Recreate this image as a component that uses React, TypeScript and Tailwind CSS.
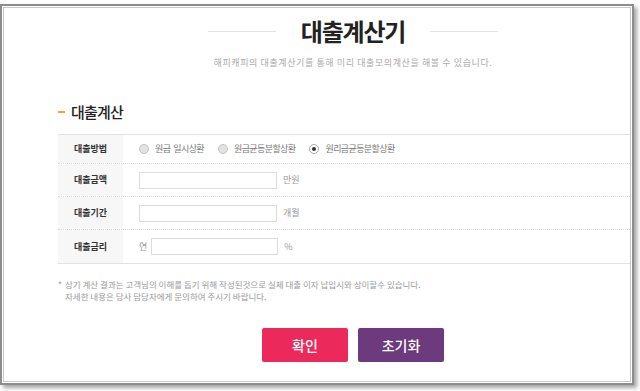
const FONT = "font-['Noto_Sans_CJK_KR','Noto_Sans',sans-serif]";

const rows = [
  { label: "대출금액", unit: "만원", prefix: "" },
  { label: "대출기간", unit: "개월", prefix: "" },
  { label: "대출금리", unit: "%", prefix: "연" },
];

const methods = ["원금 일시상환", "원금균등분할상환", "원리금균등분할상환"];

function Radio({ checked }: { checked?: boolean }) {
  return checked ? (
    <span className="flex h-[10px] w-[10px] items-center justify-center rounded-full border border-[#a8a8a8] bg-white">
      <span className="h-[4px] w-[4px] rounded-full bg-[#333]" />
    </span>
  ) : (
    <span className="h-[10px] w-[10px] rounded-full border border-[#c4c4c4] bg-[#e2e2e2]" />
  );
}

function Label({ children }: { children: string }) {
  return (
    <div className="flex w-[65px] shrink-0 items-center justify-center bg-[#f7f7f7] text-[9px] font-bold text-[#333]">
      {children}
    </div>
  );
}

export default function App() {
  return (
    <div className={`${FONT} h-[391px] w-[640px] overflow-hidden bg-white`}>
      <div className="mt-[4px] h-[381px] w-[634px] border-2 border-[#8d8d8d] p-[1px] shadow-[3px_3px_4px_rgba(0,0,0,0.35)]">
        <div className="h-full w-full overflow-hidden border border-[#c9c9c9] bg-white">
          <div className="w-[698px] px-[54px]">
            {/* title */}
            <div className="mt-[6px] flex h-[34px] items-center justify-center">
              <span className="h-px w-[68px] bg-[#e3e3e3]" />
              <h1 className="mx-[25px] text-[24px] font-bold leading-none tracking-[-1.2px] text-[#222]">
                대출계산기
              </h1>
              <span className="h-px w-[68px] bg-[#e3e3e3]" />
            </div>
            <p className="mt-[9px] text-center text-[9px] leading-[12px] tracking-[0.6px] text-[#aaa]">
              해피캐피의 대출계산기를 통해 미리 대출모의계산을 해볼 수 있습니다.
            </p>

            {/* section heading */}
            <div className="mt-[33px] flex h-[20px] items-center">
              <span className="h-[2px] w-[7px] bg-[#f5a623]" />
              <h2 className="ml-[6px] text-[15px] font-medium tracking-[-0.8px] text-[#222]">대출계산</h2>
            </div>

            {/* table */}
            <div className="mt-[12px] border-y border-[#e2e2e2] text-[9px]">
              <div className="flex h-[29px] border-b border-dotted border-[#d8d8d8]">
                <Label>대출방법</Label>
                <div className="flex items-center pl-[16px] tracking-[-0.6px] text-[#777] [word-spacing:1.5px]">
                  {methods.map((m, i) => (
                    <div key={m} className={`flex items-center ${i > 0 ? "ml-[14px]" : ""}`}>
                      <Radio checked={i === 2} />
                      <span className="ml-[6px]">{m}</span>
                    </div>
                  ))}
                </div>
              </div>
              {rows.map((r, i) => (
                <div
                  key={r.label}
                  className={`flex h-[33px] ${i < rows.length - 1 ? "border-b border-dotted border-[#d8d8d8]" : ""}`}
                >
                  <Label>{r.label}</Label>
                  <div className="flex items-center pl-[16px] text-[#999]">
                    {r.prefix && <span className="mr-[4px]">{r.prefix}</span>}
                    <div
                      className={`h-[17px] border border-[#dcdcdc] bg-white ${r.prefix ? "w-[127px]" : "w-[138px]"}`}
                    />
                    <span className="ml-[6px]">{r.unit}</span>
                  </div>
                </div>
              ))}
            </div>

            {/* notes */}
            <div className="mt-[14px] text-[8.5px] leading-[12px] text-[#999]">
              <p>
                <span className="mr-[3px]">*</span>상기 계산 결과는 고객님의 이해를 돕기 위해 작성된것으로 실제 대출 이자 납입시와 상이할수 있습니다.
              </p>
              <p className="pl-[7px]">자세한 내용은 당사 담당자에게 문의하여 주시기 바랍니다.</p>
            </div>

            {/* buttons */}
            <div className="mt-[26px] flex justify-center gap-[10px]">
              <button className="h-[34px] w-[86px] rounded-[2px] bg-[#eb2a5b] text-[14px] font-medium text-white">
                확인
              </button>
              <button className="h-[34px] w-[86px] rounded-[2px] bg-[#6c3a7d] text-[14px] font-medium text-white">
                초기화
              </button>
            </div>
          </div>
        </div>
      </div>
    </div>
  );
}
